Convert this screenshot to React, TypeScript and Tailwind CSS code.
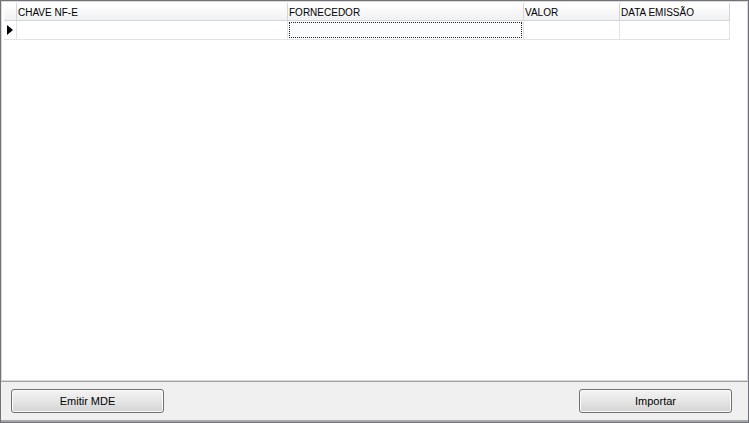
import React from "react";

export default function App() {
  const cols = [
    { label: "CHAVE NF-E", w: "w-[271px]" },
    { label: "FORNECEDOR", w: "w-[236px]" },
    { label: "VALOR", w: "w-[96px]" },
    { label: "DATA EMISSÃO", w: "w-[110px]" },
  ];
  return (
    <div
      className="w-[749px] h-[423px] border border-[#6f7378] bg-white flex flex-col text-[10px] text-black"
      style={{ fontFamily: '"Liberation Sans", Arial, sans-serif' }}
    >
      <div className="flex-1 border border-[#d9d9d9] pl-[2px] pt-[1px] overflow-hidden">
        {/* header */}
        <div className="flex h-[18px]">
          <div className="w-[13px] h-full border-r border-b border-[#d5d5d5] bg-gradient-to-b from-white to-[#f0f1f3]" />
          {cols.map((c) => (
            <div
              key={c.label}
              className={`${c.w} h-full border-r border-b border-[#d5d5d5] bg-gradient-to-b from-white to-[#f0f1f3] flex items-center pl-[1px] pt-[1px]`}
            >
              {c.label}
            </div>
          ))}
        </div>
        {/* row */}
        <div className="flex h-[19px]">
          <div className="w-[13px] h-full border-r border-b border-[#e3e3e3] flex items-center pl-[3px]">
            <svg width="6" height="10" viewBox="0 0 6 10">
              <path d="M0 0 L6 5 L0 10 Z" fill="#000" />
            </svg>
          </div>
          <div className="w-[271px] h-full border-r border-b border-[#e3e3e3]" />
          <div className="w-[236px] h-full border-r border-b border-[#e3e3e3] p-[1px]">
            <div className="w-full h-full border border-dotted border-[#222] bg-[#fbfcfe]" />
          </div>
          <div className="w-[96px] h-full border-r border-b border-[#e3e3e3]" />
          <div className="w-[110px] h-full border-r border-b border-[#e3e3e3]" />
        </div>
      </div>
      <div className="h-[41px] shrink-0 border-t border-[#a0a0a0] bg-[#f0f0f0] flex items-start justify-between pl-[10px] pr-[16px] pt-[7px] border-b-2 border-b-[#a8a8a8]">
        <Btn label="Emitir MDE" />
        <Btn label="Importar" />
      </div>
    </div>
  );
}

function Btn({ label }: { label: string }) {
  return (
    <div className="w-[153px] h-[24px] rounded-[3px] border border-[#707070] bg-gradient-to-b from-[#f3f3f3] via-[#e6e6e6] to-[#d2d2d2] flex items-center justify-center text-[11px] shadow-[inset_0_0_0_1px_#fcfcfc]">
      {label}
    </div>
  );
}
